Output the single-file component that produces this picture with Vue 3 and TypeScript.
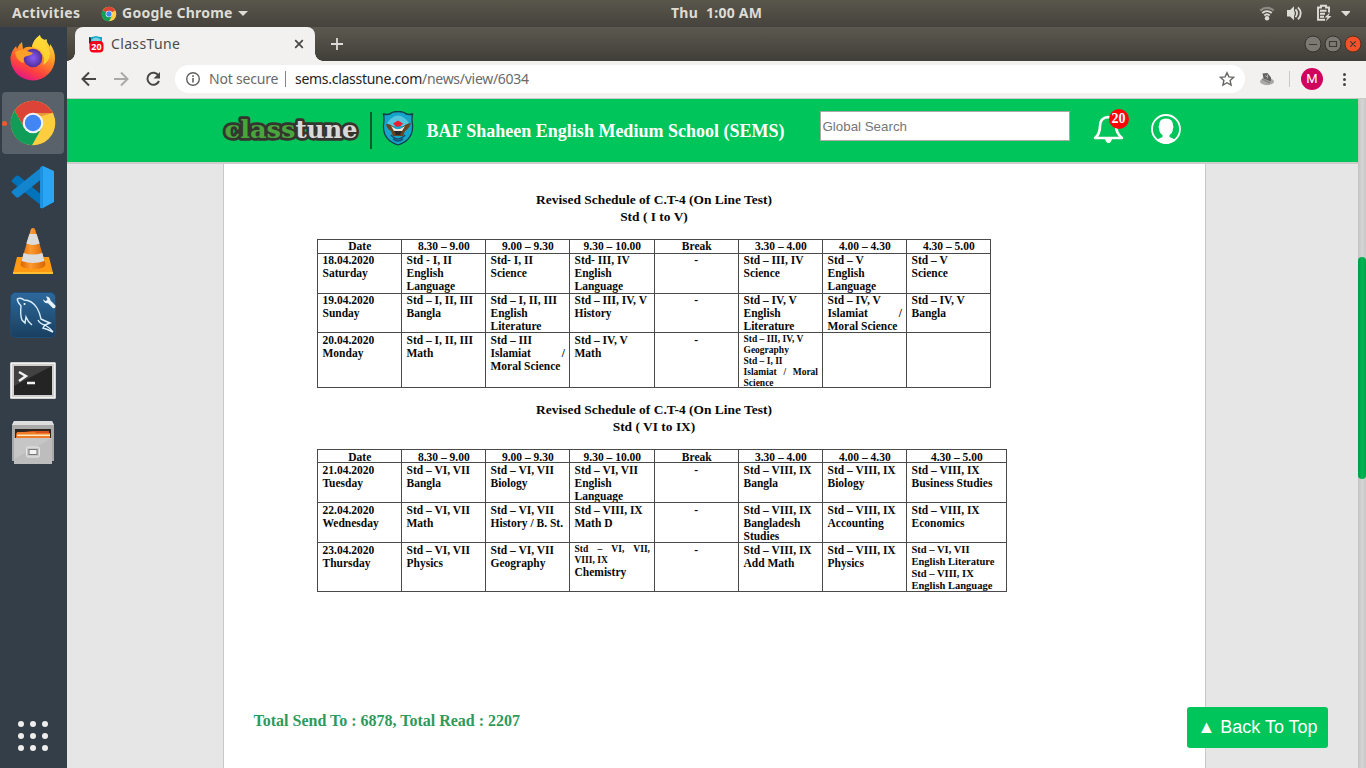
<script setup lang="ts">
interface Line { t: string; j?: boolean; s?: 'sm' | 'md' }
interface Schedule { id: string; level: string; rows: Line[][][] }

const slots: string[] = ['Date', '8.30 – 9.00', '9.00 – 9.30', '9.30 – 10.00', 'Break', '3.30 – 4.00', '4.00 – 4.30', '4.30 – 5.00']

// "~" marks a justified line, "^" a small one, "+" a medium one
const parse = (cell: string): Line[] =>
  cell.split('|').filter(Boolean).map((raw) => ({
    t: raw.replace(/[~^+]/g, ''),
    j: raw.includes('~'),
    s: raw.includes('^') ? 'sm' : raw.includes('+') ? 'md' : undefined,
  }))

const schedules: Schedule[] = [
  {
    id: 'first',
    level: 'Std ( I to V)',
    rows: [
      ['18.04.2020|Saturday', 'Std - I, II|English|Language', 'Std- I, II|Science', 'Std- III, IV|English|Language', '-', 'Std – III, IV|Science', 'Std – V|English|Language', 'Std – V|Science'],
      ['19.04.2020|Sunday', 'Std – I, II, III|Bangla', 'Std – I, II, III|English|Literature', 'Std – III, IV, V|History', '-', 'Std – IV, V|English|Literature', 'Std – IV, V|~Islamiat /|Moral Science', 'Std – IV, V|Bangla'],
      ['20.04.2020|Monday', 'Std – I, II, III|Math', 'Std – III|~Islamiat /|Moral Science', 'Std – IV, V|Math', '-', '^Std – III, IV, V|^Geography|^Std – I, II|^~Islamiat / Moral|^Science', '', ''],
    ].map((r) => r.map(parse)),
  },
  {
    id: 'second',
    level: 'Std ( VI to IX)',
    rows: [
      ['21.04.2020|Tuesday', 'Std – VI, VII|Bangla', 'Std – VI, VII|Biology', 'Std – VI, VII|English|Language', '-', 'Std – VIII, IX|Bangla', 'Std – VIII, IX|Biology', 'Std – VIII, IX|Business Studies'],
      ['22.04.2020|Wednesday', 'Std – VI, VII|Math', 'Std – VI, VII|History / B. St.', 'Std – VIII, IX|Math D', '-', 'Std – VIII, IX|Bangladesh|Studies', 'Std – VIII, IX|Accounting', 'Std – VIII, IX|Economics'],
      ['23.04.2020|Thursday', 'Std – VI, VII|Physics', 'Std – VI, VII|Geography', '^~Std – VI, VII,|^VIII, IX|Chemistry', '-', 'Std – VIII, IX|Add Math', 'Std – VIII, IX|Physics', '+Std – VI, VII|+English Literature|+Std – VIII, IX|+English Language'],
    ].map((r) => r.map(parse)),
  },
]
</script>

<template>
  <div class="screen">
    <header class="topbar">
      <span class="activities">Activities</span>
      <svg class="mini-chrome" viewBox="0 0 48 48">
        <circle cx="24" cy="24" r="22" fill="#fc4" />
        <path d="M24 24 4.9 13A22 22 0 0 1 43 13z" fill="#db4437" />
        <path d="M24 24 4.9 13A22 22 0 0 0 24 46l9.5-16.5z" fill="#0f9d58" />
        <circle cx="24" cy="24" r="10" fill="#fff" /><circle cx="24" cy="24" r="8" fill="#4285f4" />
      </svg>
      <span class="appname">Google Chrome</span>
      <i class="caret"></i>
      <span class="clock">Thu&nbsp; 1:00 AM</span>
      <svg class="tray" viewBox="0 0 100 27" width="100" height="27">
        <g fill="none" stroke="#dedcd6">
          <path d="M10.300 10.600a9.500 9.500 0 0 1 13.400 0" stroke="#8b8982" stroke-width="2.200" />
          <path d="M12.300 13a6.700 6.700 0 0 1 9.400 0M14.300 15.500a4 4 0 0 1 5.400 0" stroke-width="1.800" />
          <path d="M45.500 9.400q3.200 3.800 0 7.800M48 7.300q5.600 5.800 0 12" stroke-width="1.800" />
          <path d="M43.200 11q1.600 2.400 0 4.800" stroke-width="1.600" />
          <path d="M79 12.500V7.500h-3V5.700h-5v1.800h-3v12.200h7M70 10.700h6.500M70 13.700h5M70 16.700h4" stroke-width="1.900" />
        </g>
        <circle cx="17" cy="18.200" r="2.200" fill="#dedcd6" />
        <path d="M37 10h3l4-3.700v14l-4-3.700h-3zM80 12.500l-5.500 5h3l-2 4 6-5.500h-3zM91 11h10l-5 5.200z" fill="#dedcd6" />
      </svg>
    </header>

    <div class="desktop">
      <nav class="dock">
        <div class="app">
          <svg viewBox="0 0 62 62">
            <defs>
              <linearGradient id="ff" x1=".8" y1="0" x2=".3" y2="1"><stop offset="0" stop-color="#fff04a" /><stop offset=".4" stop-color="#ff9a22" /><stop offset=".75" stop-color="#ff4040" /><stop offset="1" stop-color="#e0148c" /></linearGradient>
              <radialGradient id="fp"><stop offset="0" stop-color="#8c5cf5" /><stop offset="1" stop-color="#51309b" /></radialGradient>
            </defs>
            <path d="M38 7q-7 5-8 12-6-1-9 2l-1-7q-4 3-5 7l-1-3q-6 7-5.500 14a22.300 22.300 0 0 0 44.500-1q0-9-5-15v3l-3-5q0-3-1-3l-1 1q-5-2-5-5z" fill="url(#ff)" />
            <path d="M38 7q-7 5-8 12 8 1 11 8 2 4 0 10 7-4 7-12-1-5-5-9-5-4-5-9z" fill="#ffdc36" opacity=".8" />
            <circle cx="31" cy="30" r="9.300" fill="url(#fp)" />
            <path d="M13 24q7-4 12-1l6 2q-1 2-6 3-5 1-3 7-8-2-9-11z" fill="#ffa127" />
          </svg>
        </div>
        <div class="app active">
          <i class="running"></i>
          <svg viewBox="0 0 62 62">
            <circle cx="31" cy="31" r="22.300" fill="#ffcd40" />
            <path d="M31 21H50.800A22.300 22.300 0 0 0 12.600 18.400L22.500 36z" fill="#db4437" />
            <path d="M12.600 18.400A22.300 22.300 0 0 0 30 53.300L39.700 36 31 31 22.400 36z" fill="#0f9d58" />
            <path d="M31 21h19.800l-15 4z" fill="#b53a2c" opacity=".35" />
            <circle cx="31" cy="31" r="10.300" fill="#f4f4f4" /><circle cx="31" cy="31" r="8.200" fill="#4285f4" />
          </svg>
        </div>
        <div class="app">
          <svg viewBox="0 0 62 62">
            <path d="m10 24 4-4q1-1 3 0l24 20v11L10 26q-1-1 0-2z" fill="#0073bb" />
            <path d="m10 37 4 4q1 1 3 0l24-19V10L10 35q-1 1 0 2z" fill="#1385cf" />
            <path d="M41 10 52 15V46L41 52Q39 53 38 51L41 48z" fill="#2aa4f4" />
            <path d="M41 10v42l-3-1V12q1-2 3-2z" fill="#1b91df" />
          </svg>
        </div>
        <div class="app">
          <svg viewBox="0 0 62 62">
            <defs><linearGradient id="vl"><stop offset="0" stop-color="#d96500" /><stop offset=".4" stop-color="#ff9a30" /><stop offset="1" stop-color="#d56500" /></linearGradient></defs>
            <path d="M15 37h32l4 16H11z" fill="#ff9a12" /><path d="M11 52h40v2H11z" fill="#ffbd31" />
            <path d="M29 9q2-2 4 0l10.500 35q0 5-12.500 5t-12.500-5z" fill="url(#vl)" />
            <path d="M27.400 14h7.200l3.100 9.600q-6.700 2.600-13.400 0zM21.600 33q9.400 3 18.800 0l2 8q-11.400 4-22.800 0z" fill="#dcdcdc" />
          </svg>
        </div>
        <div class="app">
          <svg viewBox="0 0 62 62">
            <defs><linearGradient id="my" x2="0" y2="1"><stop offset="0" stop-color="#2d699c" /><stop offset="1" stop-color="#193f60" /></linearGradient></defs>
            <rect x="8.500" y="8.500" width="45" height="45" rx="5" fill="url(#my)" stroke="#1d4d76" />
            <path d="M15 15q4-2 7 1 8 0 13 8 3 5 4 11 4 2 9 4l-5 2q5 3 8 7-6-3-10-4l2-3q-5-1-7-5M15 15q1 4 4 7-1 9 1 14l3 3 1-6q2 5 6 8" fill="none" stroke="#d8eefc" stroke-width="1.400" />
            <circle cx="22.500" cy="20" r="1" fill="#fff" />
            <path d="M44 12.500q4 0 4.500 4l5 5q.5 3-2.500 2.800l-5-5q-4 .5-5-4l2.700 2 1.800-1.800z" fill="#e8f4fc" />
          </svg>
        </div>
        <div class="app">
          <svg viewBox="0 0 62 62">
            <rect x="8" y="14" width="46" height="37" rx="1.500" fill="#cfcfcd" /><rect x="9.500" y="15.500" width="43" height="34" fill="none" stroke="#f1f1f1" />
            <rect x="12" y="18" width="38" height="29" fill="#242424" /><path d="M12 18h38L12 38z" fill="#555" opacity=".6" />
            <path d="m17 24 7 4-7 5M25 35h8" fill="none" stroke="#f1f1f1" stroke-width="2.400" />
          </svg>
        </div>
        <div class="app">
          <svg viewBox="0 0 62 62">
            <path d="M12 9h38l2 4v36H10V13z" fill="#a9a9a9" /><path d="M12 9h38l2 4H10z" fill="#dedede" />
            <path d="M13 17h36v12H13z" fill="#2c2520" /><path d="M14 21l16-2h17v8H14z" fill="#d9521b" /><path d="M15 20h18l1 1h14v7H14z" fill="#ef7a27" /><path d="M15 22.500h33v1.600H15z" fill="#fbe8bc" />
            <path d="M12 26h38v26H12z" fill="#bdbdbd" /><path d="M12 26h38L12 47z" fill="#cbcbcb" opacity=".7" />
            <rect x="24.500" y="35" width="13" height="10" rx="1.500" fill="#c8c8c8" stroke="#e7e7e7" /><rect x="27" y="37.500" width="8" height="5" fill="#f4f4f4" stroke="#777" />
          </svg>
        </div>
        <div class="apps-grid"><i v-for="n in 9" :key="n"></i></div>
      </nav>

      <section class="browser">
        <div class="titlebar">
          <div class="tab">
            <svg class="favicon" viewBox="0 0 16 17">
              <path d="M1 1h3l4-1 4 1h2v7H1z" fill="#18a5c4" /><path d="M3 4q5-5 10 0l-2 2H5z" fill="#7bd4e5" /><path d="M1 1l2 1v5H1z" fill="#333" />
              <rect x="1.500" y="5" width="14" height="11.500" rx="4" fill="#f5021c" />
              <text x="8.500" y="14" text-anchor="middle" font-size="9" font-weight="700" font-family="Open Sans, sans-serif" fill="#fff">20</text>
            </svg>
            <span class="tab-title">ClassTune</span>
            <svg class="close" viewBox="0 0 10 10"><path d="M1.200 1.200l7.600 7.600M8.800 1.200 1.200 8.800" stroke="#484746" stroke-width="1.700" /></svg>
          </div>
          <svg class="plus" viewBox="0 0 12 12"><path d="M6 0v12M0 6h12" stroke="#dddcd8" stroke-width="1.800" /></svg>
          <div class="window-buttons">
            <svg viewBox="0 0 56 18" width="56" height="18">
              <g fill="#7b7972" stroke="#33322d"><circle cx="8" cy="9" r="8" /><circle cx="28" cy="9" r="8" /><circle cx="48" cy="9" r="8" fill="#f2522a" stroke="#54301f" /></g>
              <path d="M4 9.500h8M24.500 6.500h7v5h-7zM45.300 6.300l5.400 5.400M50.700 6.300l-5.400 5.400" fill="none" stroke="#3a3934" stroke-width="1.200" />
            </svg>
          </div>
        </div>

        <div class="toolbar">
          <svg class="nav-icons" viewBox="0 0 100 36" width="100" height="36">
            <g fill="none" stroke-width="2">
              <path d="M29 18H16M22 11.500 15.500 18l6.500 6.500" stroke="#484745" />
              <path d="M47 18h13M54 11.500l6.500 6.500-6.500 6.500" stroke="#aaa9a8" />
              <path d="M91.500 14.500A6 6 0 1 0 92 20" stroke="#484745" />
            </g>
            <path d="M93 11v6.500h-6.500z" fill="#484745" />
          </svg>
          <div class="omnibox">
            <svg class="info" viewBox="0 0 16 16"><circle cx="8" cy="8" r="6.300" fill="none" stroke="#626160" stroke-width="1.400" /><path d="M8 7v4.500M8 4.300v1.600" stroke="#626160" stroke-width="1.600" /></svg>
            <span class="insecure">Not secure</span>
            <i class="sep"></i>
            <span class="url"><b>sems.classtune.com</b>/news/view/6034</span>
            <svg class="star" viewBox="0 0 16 16"><path d="m8 1.700 1.900 4.200 4.600.5-3.400 3.100 1 4.500L8 11.700 3.900 14l1-4.500L1.500 6.400l4.600-.5z" fill="none" stroke="#666564" stroke-width="1.400" /></svg>
          </div>
          <svg class="ext" viewBox="0 0 16 14"><ellipse cx="8" cy="9.500" rx="7" ry="3.700" fill="#a9a8a7" /><path d="M3.500 1.500 8.500 1l3.500 4.500v4L4.500 6.500z" fill="#62615f" /><path d="M6 3.500l3 2M8.500 2.500v4" stroke="#aaa" /><path d="M3 7l8 4" stroke="#898887" stroke-width="1.500" /></svg>
          <i class="tool-sep"></i>
          <span class="avatar">M</span>
          <span class="kebab"><i></i><i></i><i></i></span>
        </div>

        <div class="page">
          <div class="viewport">
            <div class="site-header">
              <svg class="logo" viewBox="0 0 140 34" width="140" height="34">
                <g font-family="DejaVu Serif, serif" font-weight="700" font-size="25" stroke="#35352f" stroke-width="5.500" stroke-linejoin="round" paint-order="stroke">
                  <text x="4.500" y="25" textLength="71" lengthAdjust="spacingAndGlyphs" fill="#47a53c">class</text>
                  <text x="75.500" y="25" textLength="62" lengthAdjust="spacingAndGlyphs" fill="#dadada">tune</text>
                </g>
              </svg>
              <i class="rule"></i>
              <svg class="crest" viewBox="0 0 32 35" width="32" height="35">
                <path d="M1.500 3Q7 4.500 10 1.500q6-2 12 0Q25 4.500 30.500 3q-1 5 0 11 1 15-14.500 20Q.5 29 1.500 14q1-6 0-11z" fill="#16a4cb" stroke="#173c4c" stroke-width="1.300" />
                <path d="M5 12Q16-3 27 12l-4 3H9z" fill="#55c4df" />
                <path d="M4 13q6 0 9 5h6q3-5 10-6-2 6-6 8l-2 5H11l-2-5q-4-2-5-7z" fill="#694421" />
                <path d="m11 12.500 5-3 5 3-3 3h-4z" fill="#ed1c2e" /><path d="M9 15l5 3h4l5-3-3 5h-8z" fill="#eee9df" />
                <path d="M12 20h8l-2 4h-4z" fill="#292929" /><path d="M9 24q7 8 14 0M11 28q5 4 10 0" fill="none" stroke="#154d70" stroke-width="1.500" />
              </svg>
              <span class="school">BAF Shaheen English Medium School (SEMS)</span>
              <div class="search">Global Search</div>
              <div class="bell">
                <svg viewBox="0 0 32 32" width="32" height="32"><path d="M3 26h27q-6-5-6-12 0-8-8-9-8 1-8 9 0 8-5 12z" fill="none" stroke="#fff" stroke-width="2.600" stroke-linejoin="round" /><path d="M13 27h7q-1 4-3.500 4T13 27z" fill="#fff" /></svg>
                <span class="badge">20</span>
              </div>
              <svg class="user" viewBox="0 0 30 30" width="30" height="30"><circle cx="15" cy="15" r="14" fill="none" stroke="#fff" stroke-width="1.800" /><path d="M15 4.500c5 0 7 3 7 7q1 1 0 3-.5 5-3.500 6.500v2l5.500 2.500q-4 4.500-9 4.500t-9-4.500l5.500-2.500v-2Q8.500 19.500 8 14.500q-1-2 0-3 0-7 7-7z" fill="#fff" /></svg>
            </div>
            <main class="paper">
              <div v-for="s in schedules" :key="s.id" class="schedule" :class="s.id">
                <h2>Revised Schedule of C.T-4 (On Line Test)<br />{{ s.level }}</h2>
                <div class="grid">
                  <div v-for="h in slots" :key="h" class="cell head">{{ h }}</div>
                  <template v-for="(row, r) in s.rows" :key="r">
                    <div v-for="(cell, c) in row" :key="c" class="cell" :class="{ mid: c === 4, last: r === 2 }">
                      <p v-for="(l, i) in cell" :key="i" :class="[l.s, { just: l.j }]">{{ l.t }}</p>
                    </div>
                  </template>
                </div>
              </div>
              <p class="totals">Total Send To : 6878, Total Read : 2207</p>
            </main>
            <div class="to-top">▲ Back To Top</div>
          </div>
          <div class="scrollbar"><i></i></div>
        </div>
      </section>
    </div>
  </div>
</template>

<style>
html, body { margin: 0; overflow: hidden; }
</style>

<style scoped>
* { box-sizing: border-box; }
svg { display: block; flex: none; }
span { white-space: nowrap; }
.screen { width: 1366px; height: 768px; display: flex; flex-direction: column; overflow: hidden; font-family: "Noto Sans", sans-serif; }
.topbar { position: relative; height: 27px; flex: none; display: flex; align-items: center; padding-left: 12px; background: linear-gradient(#59564c, #45433c); color: #dedcd5; font-size: 14px; font-weight: 700; }
.activities { width: 89px; letter-spacing: .33px; }
.activities, .appname, .clock { padding-bottom: 2px; }
.mini-chrome { width: 16px; height: 16px; margin-right: 5px; }
.appname { width: 111px; letter-spacing: .25px; }
.caret { margin-left: 5px; border: 5px solid transparent; border-top-color: #dedcd5; border-bottom: 0; }
.clock { position: absolute; left: 671px; letter-spacing: .27px; }
.tray { position: absolute; left: 1250px; top: 0; }
.desktop { flex: 1; min-height: 0; display: flex; }
.dock { width: 67px; flex: none; padding: 1px 3px 0 2px; display: flex; flex-direction: column; gap: 2px; background: #343e48; }
.app { width: 62px; height: 62px; flex: none; border-radius: 4px; position: relative; }
.app.active { background: #59626b; }
.running { position: absolute; left: 0; top: 28.5px; width: 5px; height: 5px; border-radius: 50%; background: #ef5a29; }
.apps-grid { display: grid; grid-template-columns: repeat(3, 6px); gap: 6px; margin: auto 0 17px 16px; }
.apps-grid i { height: 6px; border-radius: 50%; background: #eeeeec; }
.browser { flex: 1; min-width: 0; display: flex; flex-direction: column; }
.titlebar { height: 34px; flex: none; display: flex; align-items: center; padding-left: 8px; background: linear-gradient(#5b594f, #403e38); }
.tab { position: relative; width: 240px; height: 34px; display: flex; align-items: center; padding: 0 11px 0 13px; border-radius: 8px 8px 0 0; background: #f2f1f0; color: #4b4a49; font-size: 14px; }
.tab::before, .tab::after { content: ""; position: absolute; bottom: 0; width: 8px; height: 8px; }
.tab::before { left: -8px; background: radial-gradient(circle at 0 0, transparent 7.5px, #f2f1f0 8px); }
.tab::after { right: -8px; background: radial-gradient(circle at 100% 0, transparent 7.5px, #f2f1f0 8px); }
.favicon { width: 16px; height: 17px; margin-right: 7px; }
.tab-title { flex: 1; letter-spacing: .35px; padding-bottom: 1px; }
.close { width: 10px; height: 10px; }
.plus { width: 12px; height: 12px; margin-left: 16px; }
.window-buttons { margin-left: auto; padding-right: 5px; }
.window-buttons svg { overflow: visible; }
.toolbar { height: 38px; flex: none; display: flex; align-items: center; padding-bottom: 1px; background: #f2f1f0; border-bottom: 1px solid #c9cbc8; }
.nav-icons { margin-right: 8px; }
.omnibox { width: 1070px; height: 28px; border-radius: 14px; background: #fff; display: flex; align-items: center; padding: 0 10px; color: #6b6a69; font-size: 14px; }
.info { width: 16px; height: 16px; margin-right: 8px; }
.insecure { width: 69px; letter-spacing: -.2px; padding-bottom: 1px; }
.sep { width: 1px; height: 16px; background: #858483; margin: 0 9px 0 7px; }
.url { flex: 1; letter-spacing: -.28px; padding-bottom: 1px; }
.url b { font-weight: 400; color: #252423; }
.star { width: 16px; height: 16px; }
.ext { width: 16px; height: 14px; margin-left: 14px; }
.tool-sep { width: 1px; height: 16px; background: #c9c8c7; margin-left: 14px; }
.avatar { width: 22px; height: 22px; margin-left: 11px; border-radius: 50%; background: #d0045c; color: #fff; font: 13px/22px Roboto, sans-serif; text-align: center; }
.kebab { display: flex; flex-direction: column; gap: 2px; margin-left: 20px; }
.kebab i { width: 3px; height: 3px; border-radius: 50%; background: #484745; }
.page { flex: 1; min-height: 0; display: flex; background: #e6e6e6; }
.viewport { position: relative; flex: 1; }
.site-header { height: 65px; display: flex; align-items: flex-start; background: #00c55a; border-bottom: 2px solid #cbcccb; }
.logo { margin: 14px 8px 0 153px; }
.rule { width: 2px; height: 37px; margin: 13px 10px 0 2px; background: #075e2a; }
.crest { margin-top: 12px; }
.school { width: 393.5px; margin: 22px 0 0 12.5px; color: #fff; font: 700 18px/21px "Liberation Serif", serif; }
.search { width: 250px; height: 30px; margin-top: 12px; border: 1px solid #a9a9a9; padding-left: 1.5px; background: #fff; color: #767676; font: 13.33px/29px "Liberation Sans", sans-serif; }
.bell { position: relative; margin: 13px 0 0 22px; }
.badge { position: absolute; left: 17px; top: -3px; width: 20px; height: 20px; border-radius: 50%; background: #fe0505; color: #fff; font: 700 14px/19px "Liberation Serif", serif; text-align: center; text-indent: -1px; }
.user { margin: 15px 0 0 27px; }
.paper { width: 983px; height: 605px; margin-left: 156px; padding: 27px 0 0 93px; background: #fff; border: solid #c8c8c8; border-width: 0 1px; color: #080808; font-family: "Liberation Serif", serif; font-weight: 700; }
.schedule { width: 674px; }
.schedule.first { height: 210px; }
h2 { margin: 0 0 13px; height: 35px; padding-top: .4px; font-size: 13.45px; line-height: 17px; text-align: center; }
.grid { display: grid; border: solid #4a4a4a; border-width: 0 1px 1px 0; font-size: 11.5px; line-height: 13.2px; }
.first .grid { width: 674px; grid-template-columns: 84px 84px 84px 85px 84px 84px 84px 84px; grid-template-rows: 14px 40px 39px 55px; }
.second .grid { width: 690px; grid-template-columns: 84px 84px 84px 85px 84px 84px 84px 100px; grid-template-rows: 13px 40px 40px 49px; }
.cell { border: solid #4a4a4a; border-width: 1px 0 0 1px; padding: 0 4px 0 4.5px; white-space: nowrap; }
.first .last { padding-top: 1px; }
.second .cell { padding-top: 1px; }
.head, .mid { text-align: center; }
.mid { padding-right: 5px; }
p { margin: 0; }
.sm { font-size: 9.5px; line-height: 11px; }
.md { font-size: 10.5px; line-height: 12.1px; }
.just { text-align: justify; text-align-last: justify; }
.totals { margin: 119px 0 0 -63.5px; font-size: 16px; line-height: 20px; color: #2d9a5b; }
.to-top { position: absolute; right: 30px; bottom: 20px; width: 141px; height: 41px; border-radius: 3px; background: #00c55a; color: #fff; font: 18px/41px "Liberation Sans", sans-serif; text-align: center; white-space: nowrap; }
.scrollbar { width: 8px; background: linear-gradient(90deg, #c3c3c3, #d5d5d5 50%, #c8c8c8); padding-top: 158px; }
.scrollbar i { display: block; height: 222px; border-radius: 4px; background: linear-gradient(90deg, #009a45, #00b653 50%, #00a34a); }
</style>
